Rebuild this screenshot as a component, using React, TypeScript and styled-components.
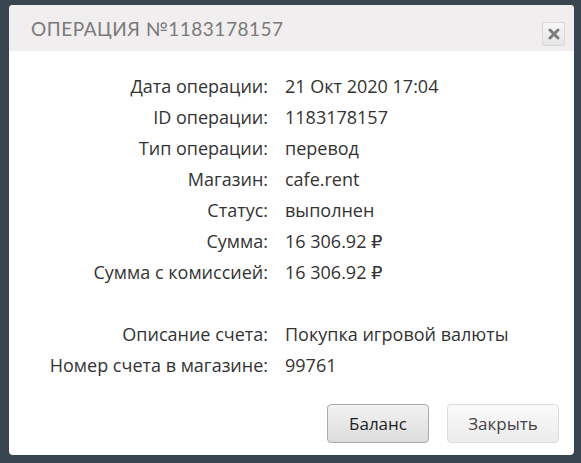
import styled, { createGlobalStyle } from "styled-components";

const Global = createGlobalStyle`
	html, body {
		margin: 0;
		padding: 0;
		background: #37464e;
	}
	body {
		width: 581px;
		height: 463px;
		overflow: hidden;
	}
`;

const Page = styled.div`
	padding: 5px 7px 8px 9px;
	box-sizing: border-box;
	width: 581px;
	height: 463px;
`;

const Modal = styled.div`
	background: #ffffff;
	border-radius: 4px;
	height: 450px;
	display: flex;
	flex-direction: column;
	overflow: hidden;
`;

const Header = styled.div`
	background: #f0eeee;
	height: 46px;
	display: flex;
	align-items: center;
	justify-content: space-between;
	padding: 0 9px 0 22px;
`;

const Title = styled.h2`
	margin: 0;
	font-family: "Lato", "DejaVu Sans", sans-serif;
	font-weight: 400;
	font-size: 19px;
	letter-spacing: 0.5px;
	color: #7a7a7a;
	text-transform: uppercase;
`;

const CloseButton = styled.button`
	width: 23px;
	height: 24px;
	padding: 0;
	border: 1px solid #d8d8d8;
	border-radius: 2px;
	background: linear-gradient(#f6f6f6, #e6e6e6);
	display: flex;
	align-items: center;
	justify-content: center;
	margin-top: 12px;
`;

const Details = styled.div`
	display: grid;
	grid-template-columns: 259px 1fr;
	column-gap: 17px;
	padding-top: 20px;
	font-family: "Open Sans", "DejaVu Sans", sans-serif;
	font-size: 18px;
	color: #333;
	flex: 1;
	align-content: start;
`;

const Label = styled.div<{ $gap?: boolean }>`
	text-align: right;
	height: 31px;
	line-height: 31px;
	margin-top: ${(p) => (p.$gap ? "31px" : "0")};
`;

const Value = styled.div<{ $gap?: boolean }>`
	height: 31px;
	line-height: 31px;
	margin-top: ${(p) => (p.$gap ? "31px" : "0")};
`;

const Footer = styled.div`
	display: flex;
	justify-content: flex-end;
	gap: 18px;
	padding: 0 15px 12px 0;
`;

const Button = styled.button<{ $primary?: boolean }>`
	height: 39px;
	border-radius: 4px;
	padding: 0;
	font-family: "Open Sans", "DejaVu Sans", sans-serif;
	font-size: 17px;
	border: 1px solid ${(p) => (p.$primary ? "#a9a9a9" : "#dcdcdc")};
	color: ${(p) => (p.$primary ? "#1e1e1e" : "#444")};
	background: ${(p) =>
		p.$primary
			? "linear-gradient(#f2f2f2, #dcdcdc)"
			: "linear-gradient(#fafafa, #ececec)"};
	width: ${(p) => (p.$primary ? "102px" : "112px")};
`;

const rows: [string, string][] = [
	["Дата операции:", "21 Окт 2020 17:04"],
	["ID операции:", "1183178157"],
	["Тип операции:", "перевод"],
	["Магазин:", "cafe.rent"],
	["Статус:", "выполнен"],
	["Сумма:", "16 306.92 ₽"],
	["Сумма с комиссией:", "16 306.92 ₽"],
];

const extra: [string, string][] = [
	["Описание счета:", "Покупка игровой валюты"],
	["Номер счета в магазине:", "99761"],
];

export default function App() {
	return (
		<Page>
			<Global />
			<Modal>
				<Header>
					<Title>Операция №1183178157</Title>
					<CloseButton aria-label="close">
						<svg width="12" height="12" viewBox="0 0 12 12">
							<path
								d="M2 2 L10 10 M10 2 L2 10"
								stroke="#7d7d7d"
								strokeWidth="3"
								strokeLinecap="round"
							/>
						</svg>
					</CloseButton>
				</Header>
				<Details>
					{rows.map(([l, v]) => (
						<>
							<Label key={l}>{l}</Label>
							<Value key={l + "v"}>{v}</Value>
						</>
					))}
					{extra.map(([l, v], i) => (
						<>
							<Label key={l} $gap={i === 0}>
								{l}
							</Label>
							<Value key={l + "v"} $gap={i === 0}>
								{v}
							</Value>
						</>
					))}
				</Details>
				<Footer>
					<Button $primary>Баланс</Button>
					<Button>Закрыть</Button>
				</Footer>
			</Modal>
		</Page>
	);
}
